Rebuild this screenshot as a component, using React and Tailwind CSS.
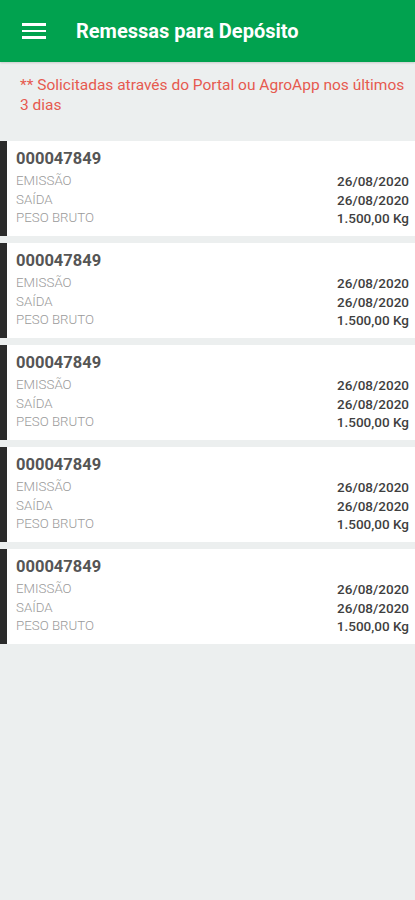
import React from 'react';

const remessas = [1, 2, 3, 4, 5].map(() => ({
  numero: '000047849',
  emissao: '26/08/2020',
  saida: '26/08/2020',
  peso: '1.500,00 Kg',
}));

function Row({ label, value }) {
  return (
    <div className="flex justify-between leading-[18.5px]">
      <span className="text-[13.3px] font-light text-[#9a9a9a]">{label}</span>
      <span className="text-[13.5px] font-medium text-[#3f3f3f]">{value}</span>
    </div>
  );
}

export default function App() {
  return (
    <div className="min-h-[900px] bg-[#ecefef] font-['Roboto',sans-serif]">
      <header className="h-[62px] bg-[#01a24f] flex items-center shadow-[0_1px_2px_rgba(0,0,0,0.15)]">
        <div className="ml-[22px] w-[24px] flex flex-col gap-[4px]">
          <span className="block h-[2.5px] bg-white"></span>
          <span className="block h-[2.5px] bg-white"></span>
          <span className="block h-[2.5px] bg-white"></span>
        </div>
        <h1 className="ml-[30px] text-[20px] font-bold text-white">Remessas para Depósito</h1>
      </header>

      <p className="pl-[20px] pt-[13px] text-[15.5px] leading-[20px] text-[#e65a4f] whitespace-nowrap">
        ** Solicitadas através do Portal ou AgroApp nos últimos
        <br />
        3 dias
      </p>

      <div className="mt-[26px] flex flex-col gap-[7px]">
        {remessas.map((r, i) => (
          <div key={i} className="flex bg-white">
            <div className="w-[7px] bg-[#2b2b2b]"></div>
            <div className="flex-1 pl-[9px] pr-[6px] pt-[7px] pb-[8.5px]">
              <div className="text-[16.5px] leading-[21px] font-bold text-[#555]">{r.numero}</div>
              <div className="mt-[3px]">
                <Row label="EMISSÃO" value={r.emissao} />
                <Row label="SAÍDA" value={r.saida} />
                <Row label="PESO BRUTO" value={r.peso} />
              </div>
            </div>
          </div>
        ))}
      </div>
    </div>
  );
}
